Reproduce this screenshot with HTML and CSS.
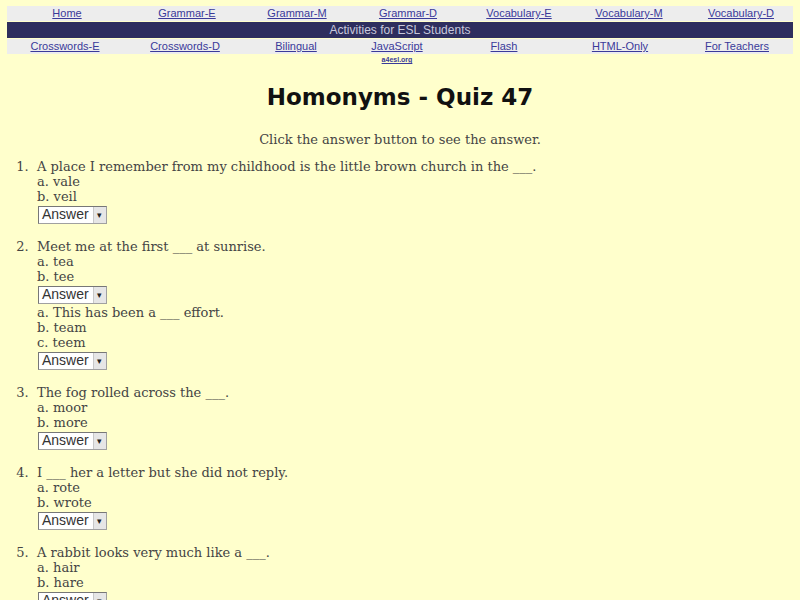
FILE: index.html
```html
<!DOCTYPE html>
<html>
<head>
<meta charset="utf-8">
<title>Homonyms - Quiz 47</title>
<link rel="stylesheet" href="styles.css">
</head>
<body>
<div class="nav">
  <div class="row links row1">
    <a href="#">Home</a>
    <a href="#">Grammar-E</a>
    <a href="#">Grammar-M</a>
    <a href="#">Grammar-D</a>
    <a href="#">Vocabulary-E</a>
    <a href="#">Vocabulary-M</a>
    <a href="#">Vocabulary-D</a>
  </div>
  <div class="banner">Activities for ESL Students</div>
  <div class="row links row3">
    <a href="#">Crosswords-E</a>
    <a href="#">Crosswords-D</a>
    <a href="#">Bilingual</a>
    <span class="cell"><a href="#">JavaScript</a><a class="tiny" href="#">a4esl.org</a></span>
    <a href="#">Flash</a>
    <a href="#">HTML-Only</a>
    <a href="#">For Teachers</a>
  </div>
</div>

<h1 class="title">Homonyms - Quiz 47</h1>
<p class="intro">Click the answer button to see the answer.</p>

<ol class="quiz">
  <li>
    <div>A place I remember from my childhood is the little brown church in the ___.</div>
    <div>a. vale</div>
    <div>b. veil</div>
    <div class="ans"><span class="sel">Answer<span class="arrow">▾</span></span></div>
  </li>
  <li>
    <div>Meet me at the first ___ at sunrise.</div>
    <div>a. tea</div>
    <div>b. tee</div>
    <div class="ans"><span class="sel">Answer<span class="arrow">▾</span></span></div>
    <div>a. This has been a ___ effort.</div>
    <div>b. team</div>
    <div>c. teem</div>
    <div class="ans"><span class="sel">Answer<span class="arrow">▾</span></span></div>
  </li>
  <li>
    <div>The fog rolled across the ___.</div>
    <div>a. moor</div>
    <div>b. more</div>
    <div class="ans"><span class="sel">Answer<span class="arrow">▾</span></span></div>
  </li>
  <li>
    <div>I ___ her a letter but she did not reply.</div>
    <div>a. rote</div>
    <div>b. wrote</div>
    <div class="ans"><span class="sel">Answer<span class="arrow">▾</span></span></div>
  </li>
  <li>
    <div>A rabbit looks very much like a ___.</div>
    <div>a. hair</div>
    <div>b. hare</div>
    <div class="ans"><span class="sel">Answer<span class="arrow">▾</span></span></div>
  </li>
</ol>
</body>
</html>
```

FILE: styles.css
```css
html, body {
  background: #ffffcc;
}
body {
  margin: 6px 7px 0 7px;
  font-family: "DejaVu Serif", serif;
  font-size: 13px;
  color: #444444;
}
.nav {
  display: flex;
  flex-direction: column;
  gap: 1px;
  font-family: "Liberation Sans", Arial, sans-serif;
  font-size: 11px;
}
.row {
  display: grid;
  justify-items: center;
  align-items: start;
}
.row1 {
  grid-template-columns: 120px 120px 100px 122px 100px 120px 1fr;
}
.row3 {
  grid-template-columns: 116px 124px 98px 104px 110px 122px 1fr;
}
.links {
  background: #ededed;
  height: 15px;
  line-height: 15px;
}
.links a, .cell a {
  color: #3a3a9a;
  text-decoration: underline;
}
.cell {
  display: flex;
  flex-direction: column;
  align-items: center;
}
.cell .tiny {
  font-size: 7px;
  line-height: 9px;
  font-weight: bold;
  margin-top: 1px;
}
.banner {
  background: #2e2e5e;
  color: #c8c8dc;
  text-align: center;
  height: 16px;
  line-height: 16px;
  font-size: 12px;
}
.title {
  margin: 28px 0 0;
  text-align: center;
  font-family: "DejaVu Sans", sans-serif;
  font-size: 23px;
  font-weight: bold;
  color: #111;
  line-height: 30px;
}
.intro {
  margin: 20px 0 0;
  text-align: center;
  line-height: 15px;
}
.quiz {
  margin: 12px 0 0;
  padding-left: 30px;
}
.quiz li {
  line-height: 15px;
  margin-bottom: 14px;
}
.quiz li::marker {
  content: counter(list-item) ".  ";
  white-space: pre;
}
.ans {
  height: 21px;
  display: flex;
  align-items: center;
}
.sel {
  display: inline-flex;
  align-items: center;
  height: 18px;
  box-sizing: border-box;
  border: 1px solid #a0a0a0;
  border-top-color: #777;
  border-left-color: #777;
  background: #fff;
  font-family: "Liberation Sans", Arial, sans-serif;
  font-size: 14px;
  color: #333;
  padding-left: 3px;
  margin-left: 1px;
}
.arrow {
  display: inline-block;
  margin-left: 4px;
  width: 12px;
  height: 16px;
  background: #e6e6e6;
  border-left: 1px solid #c8c8c8;
  font-size: 9px;
  line-height: 16px;
  text-align: center;
  color: #222;
}
```
